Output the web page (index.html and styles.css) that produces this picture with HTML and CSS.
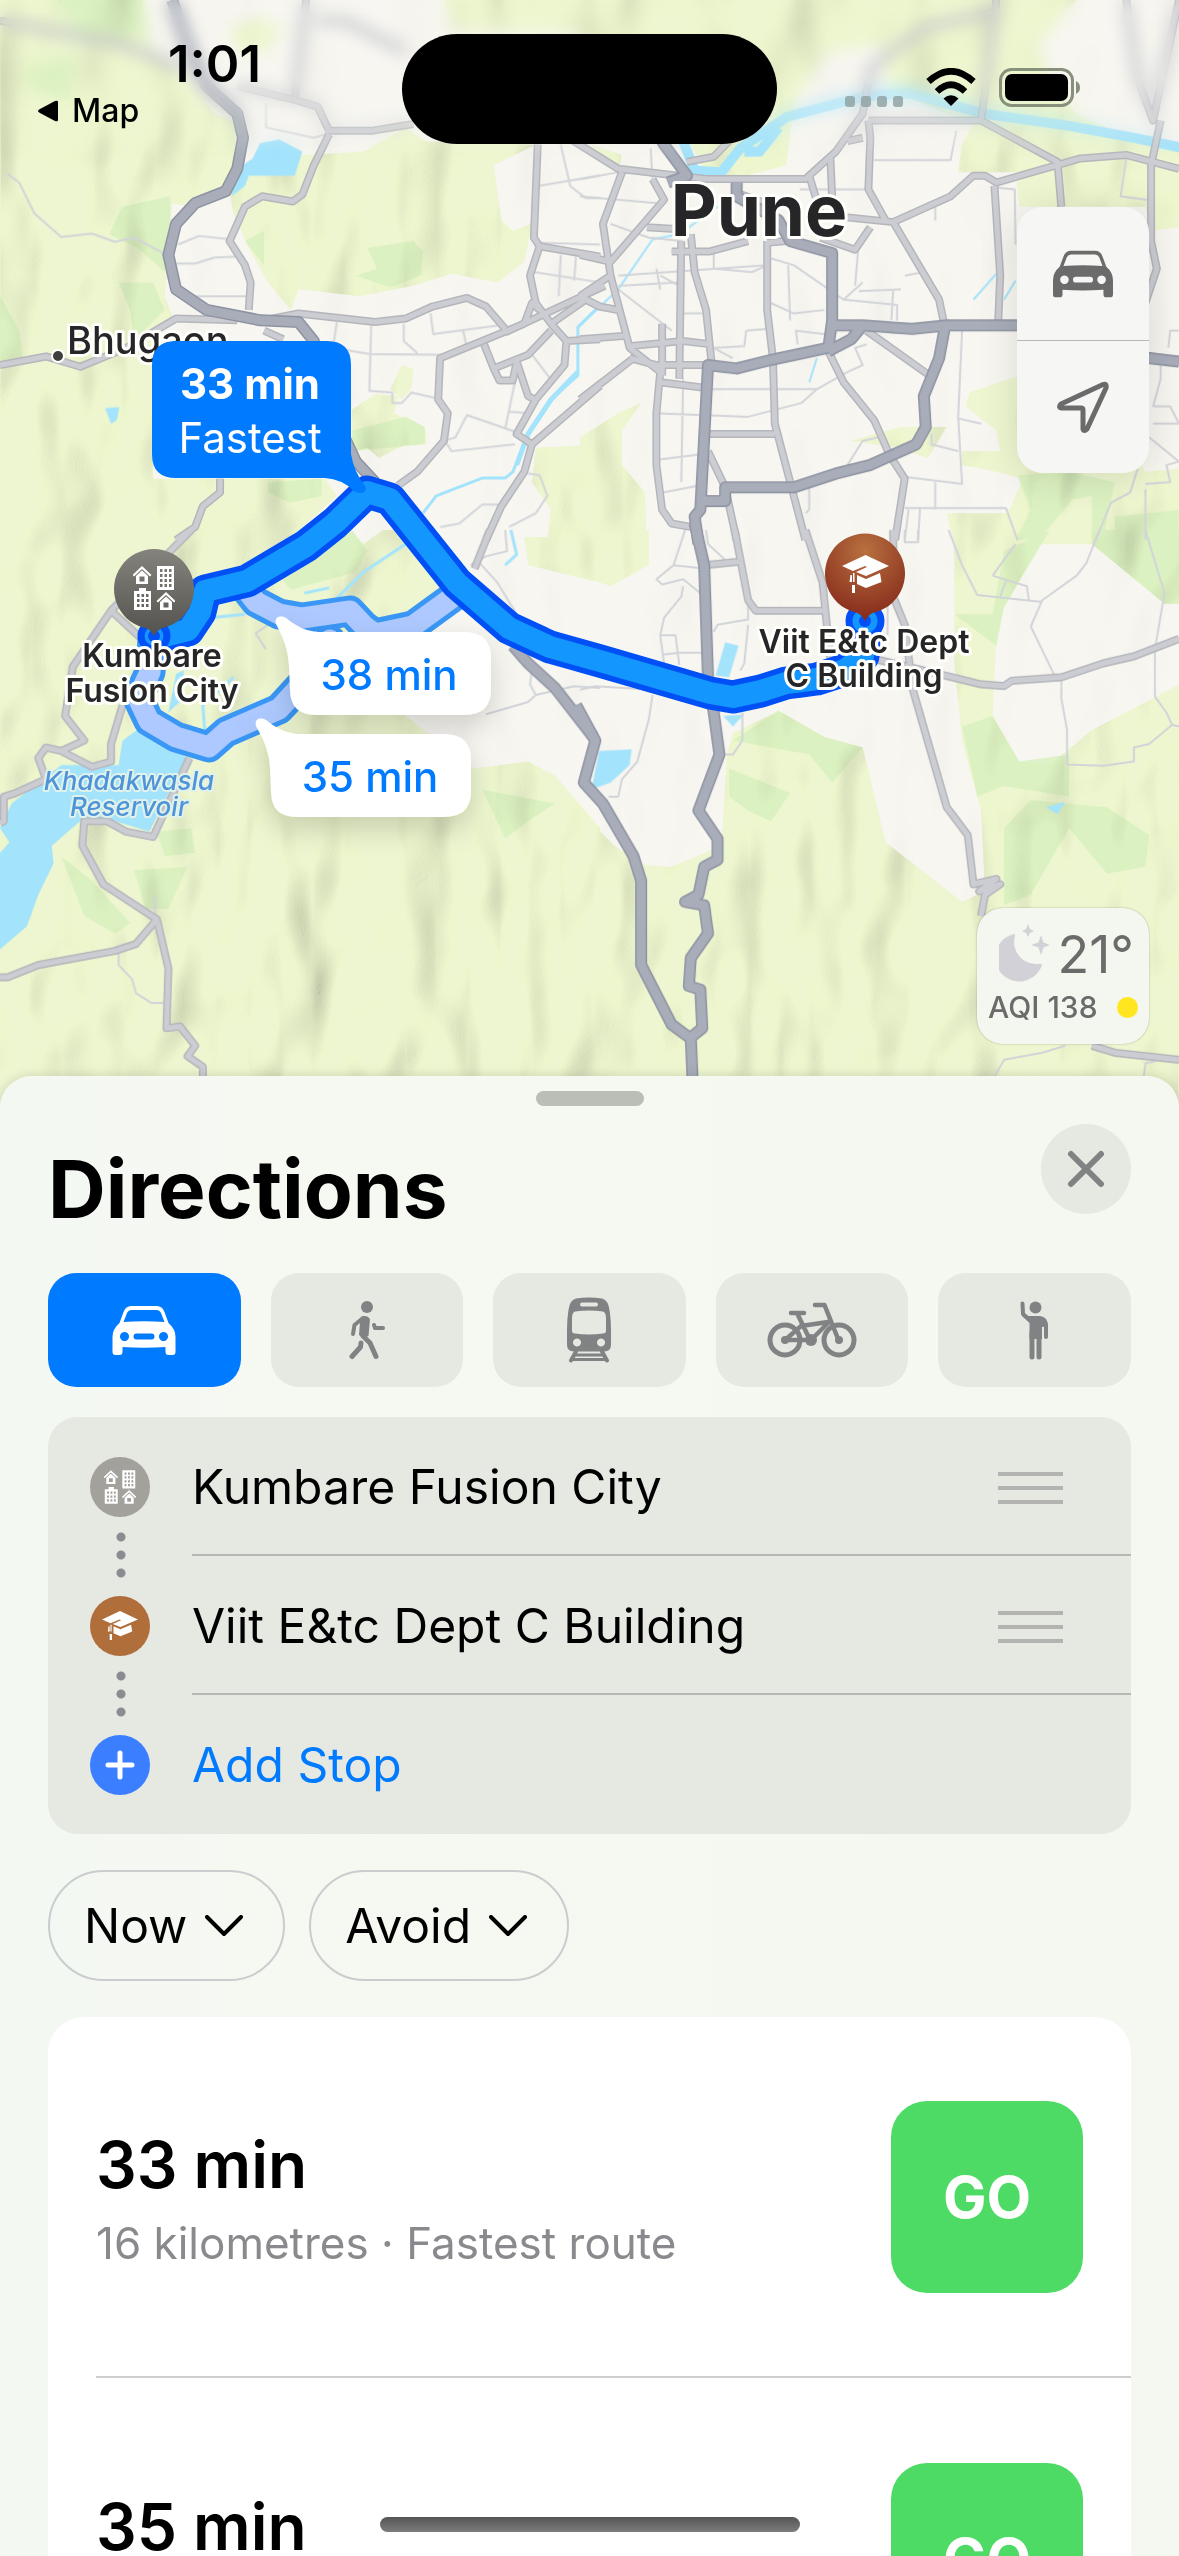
FILE: index.html
```html
<!DOCTYPE html>
<html lang="en">
<head>
<meta charset="utf-8">
<meta name="viewport" content="width=device-width, initial-scale=1">
<title>Directions</title>
<link rel="stylesheet" href="styles.css">
</head>
<body>
<svg class="sprite" aria-hidden="true">
  <symbol id="car" viewBox="0 0 63 49"><path fill-rule="evenodd" d="M7 17 11 6Q13 0 19 0H44Q50 0 52 6L56 17Q63 23 63 31V46a3 3 0 0 1-3 3h-4a3 3 0 0 1-3-3v-5Q31 42.500 10 41v5a3 3 0 0 1-3 3H3a3 3 0 0 1-3-3V31Q0 23 7 17ZM11 16 14.500 7Q16 4 19 4H44Q47 4 48.500 7L52 16Q31 14.500 11 16ZM12 26a4.500 4.500 0 1 0 .01 0ZM51 26a4.500 4.500 0 1 0 .01 0ZM24 27.500h15a3 3 0 0 1 0 6H24a3 3 0 0 1 0-6Z"/></symbol>
  <symbol id="walk" viewBox="0 0 36 59"><circle cx="18" cy="6" r="6"/><path d="M12 16Q18 13 21 18L19.500 35Q14 38 10 34L11 21Z"/><path class="line" stroke-width="4" d="M14 17 5.500 24 4 33M25 24 26 27H34"/><path class="line" stroke-width="5" d="M14 35 21 42 27 55.500M12 42 11.500 46 3 55.500"/></symbol>
  <symbol id="train" viewBox="0 0 44 65"><path fill-rule="evenodd" d="M9 1Q22-1 35 1 41 3 42 10 44 20 44 32V47Q44 54 37 54H7Q0 54 0 47V32Q0 20 2 10 3 3 9 1ZM15 5a2 2 0 0 0 0 4H29a2 2 0 0 0 0-4ZM8 14Q5 15 5 20V33Q5 36 8 36 22 38 36 36 39 36 39 33V20Q39 15 36 14 22 12 8 14ZM10 41a4 4 0 1 0 .01 0ZM34 41a4 4 0 1 0 .01 0Z"/><path class="line" stroke-width="4" d="M9 54 4 63M35 54 40 63"/><path class="line" stroke-width="3" d="M8 57.500H36M6 62H38"/></symbol>
  <symbol id="bike" viewBox="0 0 90 56"><g class="line" stroke-width="5"><circle cx="18" cy="38" r="15"/><circle cx="72" cy="38" r="15"/><path stroke-width="4.500" d="M48 3H57.500L71.500 38M24 11H37M30 11 43 38M34 24 61 20M62 20 44 38H18L33 25"/></g><circle cx="18" cy="38" r="4"/><circle cx="72" cy="38" r="4"/><circle cx="44" cy="38" r="6"/></symbol>
  <symbol id="hail" viewBox="0 0 29 59"><circle cx="15.500" cy="6.500" r="6"/><path d="M7 15H20Q28 16 28 25L22 26V38H9.500V22L2 15Z"/><path class="line" stroke-width="4" d="M2.500 2.500 3 13 10 19M26 24V36"/><path class="line" stroke-width="5" d="M12 32V56M19 32V56"/></symbol>
  <symbol id="homes" viewBox="0 0 42 44"><path fill-rule="evenodd" d="M9 0 18.500 9 17 10.500 9 3 1 10.500-.500 9ZM9 4.500 15 10V18H3V10ZM6.500 10.500V15.500H11.500V10.500ZM33 26 42.500 35 41 36.500 33 29 25 36.500 23.500 35ZM33 30.500 39 36V44H27V36ZM30.500 36.500V41.500H35.500V36.500ZM24 0H41V24H24ZM27 3V6H29.500V3ZM31.500 3V6H34V3ZM36 3V6H38.500V3ZM27 8V11H29.500V8ZM31.500 8V11H34V8ZM36 8V11H38.500V8ZM27 13V16H29.500V13ZM31.500 13V16H34V13ZM36 13V16H38.500V13ZM27 18V21H29.500V18ZM31.500 18V21H34V18ZM36 18V21H38.500V18ZM1 25H6V22H13V25H18V44H1ZM4 28V31H6.500V28ZM8.500 28V31H11V28ZM13 28V31H15.500V28ZM4 33V36H6.500V33ZM8.500 33V36H11V33ZM13 33V36H15.500V33ZM4 38V41H6.500V38ZM8.500 38V41H11V38ZM13 38V41H15.500V38Z"/></symbol>
  <symbol id="cap" viewBox="0 0 47 38"><path d="M23.500 0 47 11 24 21 14 17 25 12 23 11 11 16 0 11ZM15 20 24 24 38 18 39.500 27 24 33 15 29ZM8.500 20H10V27H7.500ZM11 18H12.500V27H11ZM10 30H13V38H10Z"/></symbol>
  <symbol id="chevron" viewBox="0 0 38 22"><path class="line" stroke-width="4" d="M2 2 19 19 36 2"/></symbol>
</svg>

<main class="app">
  <section class="map" aria-label="Map">
    <svg class="map-art" viewBox="0 0 1179 1120" preserveAspectRatio="xMidYMin slice" role="img" aria-label="Routes from Kumbare Fusion City to Viit E&amp;tc Dept C Building">
      <defs>
        <g id="hills">
          <path transform="scale(.3827 .3444)" d="M0 0H380L390 130 470 200 560 330 620 360 600 560 500 600 450 590 440 740 430 860 450 915 400 1000V1390H850L880 1440 740 1580H0ZM640 480 800 450 950 440 1060 370 1110 410 1400 420 1290 480 1310 640 1340 670 1390 650 1370 760 1300 820 1180 795 1080 830 940 860 780 840 760 900 700 820 650 720 610 620 600 560ZM1160 0H1568V100L1180 90ZM1400 1300 1580 1290V1568H1430L1440 1480 1390 1400ZM1050 1060 1080 1070 1075 1130 1050 1160 1020 1130ZM920 1190 980 1145 1040 1150 1030 1200 1110 1240 1115 1290 1060 1290 990 1330 960 1300 920 1310ZM600 80 680 50 740 80 700 150 620 160Z"/>
          <path transform="translate(580) scale(.382 .3444)" d="M0 0H1300L1200 130 1240 250 1300 330 1500 430 1568 440V660L1500 670 1480 600H1150L1140 500H990L1000 420 1030 360 850 280 800 230V130L650 150 560 300 540 480 400 520H340L280 400H0ZM30 420 110 450 100 500ZM1150 1090 1020 1140 1010 1180 1090 1250 1100 1310 1000 1310V1350L1090 1370 1160 1390 1120 1490H960L980 1580H1568V1360L1480 1370 1400 1200ZM0 1270 100 1200 160 1170 110 1250V1350L170 1430 175 1580H0ZM710 1280 840 1240 960 1240 910 1330 830 1300Z"/>
          <path transform="translate(0 530) scale(.3827 .3508)" d="M0-10H900L950 40 1000 0 1060 0 1150 150 1120 240 1010 310 1060 530 1240 680 1380 660 1450 700 1568 850V1700H0ZM1370 20H1568V150L1380 100Z"/>
          <path transform="translate(580 530) scale(.382 .3508)" d="M0 0H180V100L80 160 0 130ZM0 800 90 900 170 955 240 960 370 900 385 640 400 580 520 515 640 590 740 620 800 890 1000 1060 1060 1030 1050 800 1000 600 980 380V-10H1230L1110 220 1090 300 1080 530 1150 660 1230 670 1340 570 1500 480 1568 440V1700H0ZM1340-10H1568V210H1530L1340 40Z"/>
        </g>
        <mask id="hill-mask"><use href="#hills" fill="#fff"/><rect width="1179" height="1120" fill="#fff" opacity=".15"/></mask>
        <filter id="relief" x="0" y="0" width="100%" height="100%">
          <feTurbulence type="fractalNoise" baseFrequency=".016 .009" numOctaves="2" seed="11"/>
          <feDiffuseLighting surfaceScale="30" diffuseConstant="1.300" lighting-color="#fffff0"><feDistantLight azimuth="205" elevation="52"/></feDiffuseLighting>
        </filter>
        <filter id="soft" x="-30%" y="-30%" width="160%" height="190%"><feDropShadow dx="0" dy="12" stdDeviation="14" flood-opacity=".16"/></filter>
        <linearGradient id="grey-pin" x2="0" y2="1"><stop stop-color="#84837d"/><stop offset="1" stop-color="#53524e"/></linearGradient>
        <radialGradient id="brown-pin" cy=".2" r=".8"><stop stop-color="#b8713f"/><stop offset="1" stop-color="#86291b"/></radialGradient>

        <g id="minor">
          <path transform="scale(.3827 .3444)" d="M20 505 50 530 70 575 90 620 160 688 240 678 300 702 350 690 435 740M465 710 520 685 600 695M460 765 510 765 560 748 620 745M500 860H650M880 935 870 1010 965 1028 1155 1030M970 945 965 1135 1025 1140V1170H1050L1075 1140 1135 1155M1125 910 1132 970 1300 945M1055 940V990L1090 1025M1210 960 1220 1010M1405 540 1568 510M1465 420 1490 540 1530 575H1568M1395 790 1568 820M1465 740 1460 860M1505 745 1500 815M1410 705 1568 710M1390 1030 1445 1110M1345 1110 1320 1245M1330 1195 1380 1200M1160 1280 1190 1270 1220 1205 1350 1255M1165 1285 1180 1310 1345 1290M1150 1530 1200 1520 1260 1465 1305 1465M1380 1375 1410 1380 1430 1440 1400 1490 1330 1530M695 300V370L820 400 850 390"/>
          <path transform="translate(580) scale(.382 .3444)" d="M0 570 200 590M185 430 190 530M575 550H760M770 465H970L985 380M930 590V640M1090 545 1138 550 1140 710M0 520 100 500M80 650 180 690 270 700M100 800 490 770M100 830 260 820M350 730V780L450 790 490 770M200 780 210 840M210 800 260 830M100 840 240 960M435 960 430 1005 350 1010M435 960 490 955M350 1010 400 1040M500 750 560 770 690 870 830 885V930M570 1000 565 960 640 970M720 830 730 700M740 820 690 870M730 845 840 840M820 840 815 930M850 800 900 790M500 880 560 910 640 900M545 770 550 930M270 910 320 910M270 1100 265 1400M335 1130 620 1130 700 1080 740 1060 720 1010 750 1000M205 1200 440 1210 580 1170 620 1130M200 1335 310 1320M215 1430 310 1410M1000 960 990 1210 1000 1405 855 1385M920 1260V1290L990 1310M700 1350 740 1280 780 1270M930 1400V1480M850 1475 1115 1475 1145 1568M990 1215 1050 1230M1430 460 1415 570 1485 580M1500 1180H1545L1568 1230M1500 1230H1568M1490 1270 1568 1340 1535 1350 1545 1400 1480 1405M1460 1360 1440 1430 1390 1460 1350 1568M1520 1060V1100L1500 1180M600 1400V1480L590 1490M1568 960H1545L1540 1010M860 1480 850 1568M890 1475 885 1568M1480 1420V1568"/>
          <path transform="translate(0 530) scale(.3827 .3508)" d="M695 340 668 295 700 270M405 1045V1110M310 1205V1240L345 1280 355 1320 395 1348H430M1320 0 1325 60 1270 75M1250 90 1300 150 1350 240M1390 400 1385 440 1400 470 1500 445 1568 450M1400 470 1380 490 1270 525M1270 75 1230 100"/>
          <path transform="translate(580 530) scale(.382 .3508)" d="M275 0 245 100 200 140 215 155 270 140 315 180M245 100 330 110M330 0 335 40 380 85M270 160 265 190 220 250 210 300 220 380M210 300H250L260 385M220 355 260 350 330 350M350 290 360 270 440 255V200M440 270 430 380 420 400M190 470 180 540 150 660 110 710 100 760H75M425 520V600L400 640H380M0 455 40 445 190 455 330 420M850 0V35H885V0M965 0 1000 100 1040 185 1210 205M1080 130 1140 40M1080 130 1170 160 1175 200M1115 145 1100 190M1360 0 1325 95 1300 130 1210 200 1180 275 1240 410 1260 420V480L1275 570V668L1370 672 1450 660V620L1490 610 1550 555 1568 560M1550 555 1535 520 1505 475V340L1530 180 1480 0M805 300V200M1080 1568 1110 1510 1210 1490 1270 1470M1475 1568 1480 1520 1505 1515"/>
        </g>
        <g id="roads">
          <path transform="scale(.3827 .3444)" d="M0 1060 120 1035 210 1065 330 1010 460 925 620 930M690 930 780 910 980 935 1060 925 1130 890 1220 865 1270 890 1320 955M860 390 820 480 790 565 765 585 685 570 640 600 600 700 640 770 655 820 650 900M860 380 830 310 770 290 620 250M850 380H970L1080 360M770 290 800 0M0 60 320 130 480 200M830 60 900 60 1060 150M1405 420 1395 690 1410 715 1385 800 1400 880 1440 940 1480 990 1475 1060 1400 1160 1350 1260 1390 1290M1320 965 1580 830M1370 940 1150 1040 1145 1160 1170 1200 1160 1280 1090 1370 1040 1410M1568 1120 1390 1290 1370 1370 1310 1470 1270 1568M1410 715 1568 745M1440 960 1380 1030 1290 1070 1265 1000M1290 1070 1305 1105H1340L1350 1050 1380 1150 1405 1165M1440 940 1530 870 1568 890M1480 990 1568 985M1370 940 1390 880 1410 900M575 1390V1430L530 1470 510 1530 460 1568M690 960 740 985"/>
          <path transform="translate(580) scale(.382 .3444)" d="M-30 400 100 490 330 520H590L670 440 740 330 760 200 900 80 1100 30M280 470 350 455 390 410M600 510 630 620M655 450 660 570M755 350 760 400 755 550 800 640M755 350H1050L1250 470 1260 600M1050 350 1090 0M700 410 740 400M600 620 820 645 910 600 970 570 1030 510H1060L1090 530 1310 460 1430 450 1568 490M1430 0 1460 230 1500 350 1568 0M1520 350 1495 480V700L1510 780 1480 880M1085 540 1100 800 1095 930M820 645 940 870 955 950M110 500 60 650 80 800 130 1010 210 1080 200 1200V1350L215 1480 240 1520 290 1530M190 520 220 580 80 760 0 740M80 800 0 860M265 700 260 1100M290 680 300 790 330 900 345 1060M240 730H340L440 700M490 700V900L505 1040 510 1230 590 1568M650 1020 690 1110 770 1220 810 1320 850 1390 825 1568M750 960 915 1090M140 1040 0 1160M130 1005 270 990 345 1000M0 985 120 975M130 1040 200 1060 340 1060M335 1260H510M380 1415 410 1568M335 1310 380 1415M210 1110 320 1125M215 940V1090M175 660 250 665M0 860 50 890 100 900M630 690 720 725 760 660M410 560 510 600M490 705 540 700"/>
          <path transform="translate(0 530) scale(.3827 .3508)" d="M500 0 290 230 190 390 170 530 220 600 160 630 120 620 100 650 120 710 40 750 10 760V830L0 835M290 230 380 320M160 630 240 675 290 660V610L320 500M495 650 400 875 330 860 280 830H220L215 900 270 1010 410 1110 440 1250 435 1420 470 1415 510 1470 490 1500 530 1530V1600M410 1110 355 1180 300 1200 100 1240 20 1275H0M1280 0 1240 110"/>
          <path transform="translate(580 530) scale(.382 .3508)" d="M405 0 440 200 460 230H640M590 0 635 150 655 370M330 100 420 90M820 0V190L850 270 870 450 960 790 1015 870 1030 1010 1090 995 1045 1030 1100 1010 1060 1040 1050 1100M780 370 900 400 1050 440 1110 445 1130 430 1260 420 1370 380 1450 360 1568 310M1340 1470 1400 1490 1568 1510"/>
        </g>
        <g id="highways">
          <path transform="scale(.3827 .3444)" d="M450 0 490 130 540 250 620 330 635 400 620 490 590 555 510 590 460 650 440 740 460 840 540 900 680 930 780 935 820 990 850 1150 930 1340 980 1400"/>
          <path transform="translate(580) scale(.382 .3444)" d="M160 300 220 420 280 510 230 530M410 530V570L520 640 550 700 660 735V930L650 1010 500 1045 410 1070 335 1060 315 1480 300 1500 310 1580M650 945H740L870 955 960 945H1150L1490 1040 1568 1050M740 945 710 985 650 1020M955 950 940 1040 900 1150 905 1240 880 1290 760 1350 670 1375 560 1415H380V1455H320"/>
          <path transform="translate(0 530) scale(.3827 .3508)" d="M1340 330 1380 380 1450 450 1550 590"/>
          <path transform="translate(580 530) scale(.382 .3508)" d="M-10 500 40 600 10 720 60 780 140 930 160 1000V1240L240 1410 290 1450 300 1700M300-20 325 100 335 420 350 520 365 640 310 800 360 880V940L325 960 310 1040 275 1060 325 1070 335 1150 290 1220 285 1300 315 1310 320 1420 280 1455"/>
        </g>
      </defs>

      <rect width="1179" height="1120" fill="#f7f6f1"/>
      <use href="#hills" fill="#edf6d0"/>
      <g class="woods">
        <path transform="scale(.3827 .3444)" d="M320 600 445 570V690L430 790 360 720 285 680ZM310 820H400L430 900 350 990 340 900ZM960 720 1080 700 1105 730 1100 800 1020 835 930 800 985 780ZM0 860 50 960 60 1040 0 1060ZM700 1400 840 1390V1440L760 1460 700 1430ZM640 700 690 670V770ZM150 0H370L390 110H200ZM60 200 200 150 180 290 80 260ZM920 1250 1060 1210 1110 1240V1290L920 1310Z"/>
        <path transform="translate(580) scale(.382 .3444)" d="M1145 1380 1280 1370 1400 1400 1370 1568H1340V1440L1290 1450 1200 1568H1140L1180 1480ZM1400 1500 1568 1480V1568H1400Z"/>
        <path transform="translate(0 530) scale(.3827 .3508)" d="M720 120 840 60 920 0 960 60 930 120 760 170ZM410 860 500 850 510 920 430 930ZM350 970 490 960 440 1080 380 1080ZM1260 740 1450 780 1380 830 1320 880ZM160 930 240 1000 340 1120 300 1150 220 1100Z"/>
        <path transform="translate(580 530) scale(.382 .3508)" d="M400 600 520 515 640 590 740 620 660 720 600 640 500 620ZM390 680 550 750 500 830 440 800 390 760ZM1000 560 1080 530 1150 660 1280 640V760L1110 730 1040 760ZM1110 850 1180 770 1380 790 1490 870 1480 960 1380 980 1280 850 1180 1040 1110 1070ZM980 240 1080 240 1110 60 1230 0 1110 220 1090 330ZM1340 0H1568V210H1530L1340 40Z"/>
      </g>
      <g mask="url(#hill-mask)" class="relief"><rect width="1179" height="1120" filter="url(#relief)"/></g>
      <g class="water">
        <path transform="scale(.3827 .3444)" d="M680 415 730 405 790 440 770 510H650L640 540 605 570 620 490 660 460ZM275 1185 312 1182 305 1220 290 1230Z"/>
        <path transform="translate(0 530) scale(.3827 .3508)" d="M370 560 320 600 310 670H160L30 780 0 850 25 890 0 920V1195L70 1130 100 1040 140 950 135 900 220 820 300 830 390 860 440 750 490 650ZM460 410 480 400V480L440 520Z"/>
        <path transform="translate(580 530) scale(.382 .3508)" d="M380 320 415 330 390 420 355 415ZM375 530 430 525 400 560ZM50 630 135 625 130 670 80 720 30 740ZM1220 790 1270 775 1250 810Z"/>
      </g>
      <g class="rivers">
        <path stroke-width="3" transform="scale(.3827 .3444)" d="M1560 895 1510 950V1090L1440 1160 1380 1260 1340 1370 1320 1388H1260L1140 1440 1105 1490"/>
        <path stroke-width="5" transform="scale(.3827 .3444)" d="M1510 1080 1440 1160 1380 1260 1350 1350"/>
        <path stroke-width="10" transform="translate(580) scale(.382 .3444)" d="M1580 430 1450 400 1280 365 1060 330 860 270 740 280 540 340 420 430 370 500 300 495 270 410M430 440H470L520 370"/>
        <path stroke-width="2" transform="translate(580) scale(.382 .3444)" d="M0 945 100 840 190 695 260 680 360 600M1090 795 1030 870M1140 815 1110 870M620 1040 600 1110"/>
        <path stroke-width="3" transform="translate(0 530) scale(.3827 .3508)" d="M1060 40 950 120 880 195M550 250 640 240M795 180 860 165M610 420 530 500 535 570M1335 0 1350 70 1320 100"/>
      </g>
      <use href="#minor" class="minor"/>
      <use href="#roads" class="road-edge"/><use href="#roads" class="road"/>
      <use href="#highways" class="highway-edge"/><use href="#highways" class="highway"/>

      <g class="route">
        <g stroke="#3a97f5" stroke-width="31"><path d="M245 588 256 602 279 614 302 618 350 611 364 626 375 634 413 626 457 594"/><path d="M153 640 150 672 138 698 149 721 176 737 209 747 226 732 279 709 302 684 330 640"/></g>
        <g stroke="#adc9ff" stroke-width="21"><path d="M245 588 256 602 279 614 302 618 350 611 364 626 375 634 413 626 457 594"/><path d="M153 640 150 672 138 698 149 721 176 737 209 747 226 732 279 709 302 684 330 640"/></g>
        <path stroke="#0050f5" stroke-width="33" d="M160 637 188 630 200 612 205 591 247 581 279 562 306 546 335 523 367 492 390 499 457 583 509 628 550 647 600 661 710 693 733 697 761 691 786 683 817 679 845 670 863 656 865 625"/>
        <path stroke="#1496ff" stroke-width="22" d="M160 637 188 630 200 612 205 591 247 581 279 562 306 546 335 523 367 492 390 499 457 583 509 628 550 647 600 661 710 693 733 697 761 691 786 683 817 679 845 670 863 656 865 625"/>
      </g>
      <g fill="#1496ff" stroke="#0050f5" stroke-width="7"><circle cx="154" cy="636" r="13"/><circle cx="865" cy="621" r="16"/></g>
      <circle cx="154" cy="636" r="6" fill="#0050f5"/><circle cx="865" cy="621" r="6" fill="#0050f5"/>

      <g class="label">
        <circle cx="58" cy="356" r="6" fill="#3f3f3b" stroke="#fff" stroke-width="2"/>
        <text x="67" y="354" class="town">Bhugaon</text>
        <text x="759" y="236" class="city">Pune</text>
        <g class="lake"><text x="129" y="790">Khadakwasla</text><text x="129" y="816">Reservoir</text></g>
        <g class="place"><text x="152" y="667">Kumbare</text><text x="152" y="702">Fusion City</text></g>
        <g class="place"><text x="864" y="653">Viit E&amp;tc Dept</text><text x="864" y="687">C Building</text></g>
      </g>

      <path fill="url(#grey-pin)" d="M154 636Q150 628 143 627.500A40 40 0 1 1 165 627.500Q158 628 154 636Z"/>
      <use href="#homes" x="133" y="566" width="42" height="44" fill="#fff"/>
      <path fill="url(#brown-pin)" d="M865 621Q861 613 854 612A40 40 0 1 1 876 612Q869 613 865 621Z"/>
      <use href="#cap" x="842" y="555" width="47" height="38" fill="#fff"/>

      <path filter="url(#soft)" fill="#fff" d="M289 665Q288 645 277 626C273 619 278 614 286 618Q300 630 316 632H464Q491 632 491 658V689Q491 715 464 715H316Q290 715 290 689Z"/>
      <path filter="url(#soft)" fill="#fff" d="M270 767Q269 747 257 728C253 721 258 716 266 720Q280 732 296 734H444Q471 734 471 760V791Q471 817 444 817H297Q271 817 271 791Z"/>
      <path fill="#007aff" d="M176 341H327Q351 341 351 365V454Q354 472 365 486C368 493 361 495 354 491Q342 479 325 478H176Q152 478 152 454V365Q152 341 176 341Z"/>
      <g class="bubble">
        <text x="250" y="399" class="bubble-fast">33 min</text><text x="250" y="453" class="bubble-note">Fastest</text>
        <text x="389" y="690">38 min</text><text x="370" y="792">35 min</text>
      </g>
    </svg>

    <div class="haze"></div>

    <header class="status">
      <div class="status-left">
        <time class="clock">1:01</time>
        <a class="back" href="#"><svg width="20" height="22" viewBox="0 0 20 22"><path d="M0 11Q0 10 2 9L17 1Q20 0 20 2V20Q20 22 17 21L2 13Q0 12 0 11Z"/></svg>Map</a>
      </div>
      <div class="island"></div>
      <div class="status-right">
        <svg class="cell" width="58" height="11" viewBox="0 0 58 11"><g fill="#8ea0a0"><rect width="10" height="11" rx="3"/><rect x="16" width="10" height="11" rx="3"/><rect x="32" width="10" height="11" rx="3"/><rect x="48" width="10" height="11" rx="3"/></g></svg>
        <svg width="50" height="38" viewBox="0 0 50 38"><path d="M25 38 17.500 30.500Q25 24 32.500 30.500Z"/><g fill="none" stroke="#000" stroke-width="6.500"><path d="M11 23.500Q25 10 39 23.500"/><path d="M2.500 13.500Q25-7 47.500 13.500"/></g></svg>
        <svg width="82" height="39" viewBox="0 0 82 39"><rect x="1.500" y="1.500" width="72" height="36" rx="11" fill="none" stroke="#87907a" stroke-width="3"/><rect x="6" y="6" width="63" height="27" rx="7"/><path d="M77 13Q81 15 81 19.500 81 24 77 26Z" fill="#87907a"/></svg>
      </div>
    </header>

    <div class="controls">
      <button type="button" aria-label="Map mode"><svg width="60" height="48"><use href="#car"/></svg></button>
      <button type="button" aria-label="My location"><svg width="52" height="52" viewBox="0 0 52 52"><path fill="none" stroke="currentColor" stroke-width="5" stroke-linejoin="round" d="M46 3.500Q50 2 49 7L30 48Q27 51 26 48V29Q26 27 24 27H4Q1 26 4 23Z"/></svg></button>
    </div>

    <div class="weather">
      <div class="weather-now"><svg width="52" height="58" viewBox="0 0 52 58"><g fill="#d2d1d7"><path d="M15 10A24 24 0 1 0 43 41Q42 39 39 40A22 22 0 0 1 16 12Q16 10 15 10Z"/><path d="M29 0 31 5 35 7 31 9 29 13 27 9 23 7 27 5ZM42 11 44.500 18.500 51 21 44.500 23.500 42 31 39.500 23.500 32 21 39.500 18.500Z"/></g></svg><span>21°</span></div>
      <div class="aqi"><span>AQI 138</span><i></i></div>
    </div>
  </section>

  <section class="sheet">
    <div class="grabber"></div>
    <div class="title-row">
      <h1>Directions</h1>
      <button type="button" class="close" aria-label="Close"><svg width="38" height="38" viewBox="0 0 38 38"><path class="line" stroke-width="6" d="M4 4 34 34M34 4 4 34"/></svg></button>
    </div>

    <nav class="modes" aria-label="Travel mode">
      <button type="button" class="mode active" aria-label="Drive"><svg width="64" height="49"><use href="#car"/></svg></button>
      <button type="button" class="mode" aria-label="Walk"><svg width="36" height="59"><use href="#walk"/></svg></button>
      <button type="button" class="mode" aria-label="Transit"><svg width="44" height="66"><use href="#train"/></svg></button>
      <button type="button" class="mode" aria-label="Cycle"><svg width="90" height="56"><use href="#bike"/></svg></button>
      <button type="button" class="mode" aria-label="Rideshare"><svg width="29" height="59"><use href="#hail"/></svg></button>
    </nav>

    <ol class="stops">
      <li class="stop">
        <span class="badge homes"><svg width="32" height="34"><use href="#homes"/></svg></span>
        <span class="stop-name">Kumbare Fusion City</span>
        <span class="handle"></span>
      </li>
      <li class="stop">
        <span class="badge school"><svg width="36" height="29"><use href="#cap"/></svg></span>
        <span class="stop-name">Viit E&amp;tc Dept C Building</span>
        <span class="handle"></span>
      </li>
      <li class="stop">
        <span class="badge add"><svg width="30" height="30" viewBox="0 0 30 30"><path class="line" stroke-width="5" d="M15 3V27M3 15H27"/></svg></span>
        <a class="stop-name" href="#">Add Stop</a>
      </li>
    </ol>

    <div class="options">
      <button type="button" class="chip">Now<svg width="38" height="22"><use href="#chevron"/></svg></button>
      <button type="button" class="chip">Avoid<svg width="38" height="22"><use href="#chevron"/></svg></button>
    </div>

    <ul class="routes">
      <li class="route-row">
        <div class="route-text"><h2>33 min</h2><p>16 kilometres · Fastest route</p></div>
        <button type="button" class="go">GO</button>
      </li>
      <li class="route-row">
        <div class="route-text"><h2>35 min</h2><p></p></div>
        <button type="button" class="go">GO</button>
      </li>
    </ul>
  </section>
  <div class="home-bar"></div>
</main>
</body>
</html>
```
FILE: styles.css
```css
* { box-sizing: border-box; }

body {
  margin: 0;
  background: #f5f7f1;
  color: #000;
  font-family: Inter, "Liberation Sans", sans-serif;
}

button {
  border: 0;
  padding: 0;
  background: none;
  color: inherit;
  font: inherit;
  cursor: pointer;
}

a { color: inherit; text-decoration: none; }
h1, h2, p, ol, ul { margin: 0; padding: 0; }
ol, ul { list-style: none; }
svg { display: block; fill: currentColor; }
.sprite { position: absolute; width: 0; height: 0; }
.line { fill: none; stroke: currentColor; stroke-linecap: round; stroke-linejoin: round; }

.app {
  position: relative;
  height: 100vh;
  overflow: hidden;
}

/* Map */
.map { position: relative; }
.map-art { width: 100%; aspect-ratio: 1179 / 1120; }
.map-art path { vector-effect: non-scaling-stroke; }
.woods { fill: #d8f1bf; opacity: .8; }
.water { fill: #a3e3fc; }
.relief { mix-blend-mode: multiply; opacity: .2; }
.rivers { fill: none; stroke: #a3e3fc; stroke-linejoin: round; }
.minor, .road, .road-edge, .highway, .highway-edge { fill: none; stroke-linejoin: round; }
.minor { stroke: #d2d4d9; stroke-width: 2px; }
.road-edge { stroke: #b4b6bc; stroke-width: 8px; }
.road { stroke: #cccdd2; stroke-width: 5px; }
.highway-edge { stroke: #8e93a2; stroke-width: 12px; }
.highway { stroke: #a8adb9; stroke-width: 9px; }
.route { fill: none; stroke-linejoin: round; stroke-linecap: round; }

.label text {
  fill: #262628;
  stroke: #fffffb;
  stroke-width: 6px;
  stroke-linejoin: round;
  paint-order: stroke;
}
.label .town { font-size: 38px; font-weight: 500; }
.label .city { font-size: 71px; font-weight: 700; text-anchor: middle; }
.label .place { font-size: 32px; font-weight: 600; text-anchor: middle; }
.label .lake { font-size: 26px; font-weight: 500; font-style: italic; text-anchor: middle; }
.label .lake text { fill: #4f93d8; stroke: #e0f2ea; stroke-width: 4px; }
.bubble { fill: #007aff; font-size: 42px; font-weight: 500; text-anchor: middle; }
.bubble .bubble-fast { fill: #fff; font-weight: 700; }
.bubble .bubble-note { fill: #fff; font-weight: 400; }

.haze {
  position: absolute;
  inset: 0 0 auto;
  height: 160px;
  backdrop-filter: blur(8px);
  mask-image: linear-gradient(#000 50%, transparent);
}

/* Status bar */
.status {
  position: absolute;
  inset: 0 0 auto;
  display: grid;
  grid-template-columns: 1fr 375px 1fr;
  padding-top: 34px;
}
.status-left { padding-left: 38px; }
.clock { display: block; padding-left: 130px; font-size: 51px; font-weight: 600; line-height: 60px; }
.back { display: flex; align-items: center; gap: 14px; font-size: 32px; font-weight: 500; line-height: 34px; }
.island { height: 110px; border-radius: 55px; background: #000; }
.status-right { display: flex; justify-content: flex-end; align-items: flex-start; gap: 23px; padding: 34px 98px 0 0; }
.cell { margin-top: 28px; opacity: .8; }

/* Floating map panels */
.controls, .weather {
  position: absolute;
  right: 30px;
  border-radius: 26px;
  background: #f6f7f5;
  color: #6b6b6b;
  box-shadow: 0 4px 40px rgba(0, 0, 0, .12);
}
.controls { top: 207px; width: 132px; }
.controls button { display: grid; place-items: center; width: 100%; height: 133px; }
.controls button + button { border-top: 1px solid #b5b6b5; }
.weather { top: 908px; width: 172px; padding: 16px 11px; background: #f4f7ef; box-shadow: 0 0 2px rgba(0, 0, 0, .3); }
.weather-now { display: flex; justify-content: space-between; padding-left: 11px; font-size: 52px; line-height: 62px; }
.weather-now span { margin-right: 4px; }
.aqi { display: flex; justify-content: space-between; align-items: center; font-size: 30px; font-weight: 500; line-height: 42px; }
.aqi i { width: 21px; height: 21px; border-radius: 50%; background: #ffe620; }

/* Sheet */
.sheet {
  position: relative;
  margin-top: -44px;
  padding: 15px 48px 0;
  border-radius: 32px 32px 0 0;
  background: linear-gradient(90deg, #f3f8f3, #f6f8f2 20%, #f5f7f1);
  box-shadow: 0 0 12px rgba(0, 0, 0, .15);
}
.grabber { width: 108px; height: 15px; margin: 0 auto; border-radius: 8px; background: #bbbdb7; }
.title-row { display: flex; justify-content: space-between; margin-top: 18px; height: 149px; }
h1 { padding-top: 15px; font-size: 80px; font-weight: 700; line-height: 100px; }
.close { display: grid; place-items: center; width: 90px; height: 90px; border-radius: 50%; background: #e6e8e2; color: #808284; }

.modes { display: grid; grid-template-columns: repeat(5, 1fr); gap: 30px; }
.mode { display: grid; place-items: center; height: 114px; border-radius: 28px; background: #e6e8e2; color: #808284; }
.mode.active { background: #007aff; color: #fff; }

.stops { margin-top: 30px; border-radius: 30px; background: #e6e8e2; }
.stop { position: relative; display: flex; align-items: center; padding-left: 42px; height: 139px; font-size: 48px; }
.stop-name { display: flex; align-items: center; flex: 1; align-self: stretch; margin-left: 42px; padding-top: 2px; border-bottom: 2px solid #b7b8b4; }
.stop:last-child .stop-name { border-color: transparent; }
a.stop-name { color: #007aff; }
.badge { display: grid; place-items: center; width: 60px; height: 60px; border-radius: 50%; color: #fff; }
.homes { background: #a2a19c; }
.school { background: #b06e3a; }
.add { background: #3b7eff; }
.stop + .stop::before {
  content: "";
  position: absolute;
  top: -28px;
  left: 68px;
  width: 10px;
  height: 54px;
  background: radial-gradient(circle, #8c8b92 4px, transparent 5px) center / 10px 18px;
}
.handle {
  align-self: stretch;
  padding: 55px 68px 50px 0;
  border-bottom: 2px solid #b7b8b4;
}
.handle::before {
  content: "";
  display: block;
  width: 65px;
  height: 32px;
  background: linear-gradient(#b3b4b1 4px, transparent 4px) 0 0 / 100% 14px;
}

.options { display: flex; gap: 24px; margin-top: 36px; }
.chip { display: flex; align-items: center; gap: 18px; height: 111px; padding: 0 40px 0 34px; border: 2px solid #cbccce; border-radius: 56px; font-size: 48px; }

.routes { margin-top: 36px; border-radius: 36px; background: #fff; }
.route-row { display: flex; justify-content: space-between; align-items: center; margin-left: 48px; padding-right: 48px; height: 361px; }
.route-row:first-child { border-bottom: 2px solid #cfcfd0; }
.route-text { padding-top: 13px; }
h2 { font-size: 64px; font-weight: 600; line-height: 80px; }
.route-text p { min-height: 76px; color: #8a8a8e; font-size: 44px; line-height: 76px; }
.go { width: 192px; height: 192px; border-radius: 36px; background: #4ddb65; color: #fff; font-size: 58px; font-weight: 700; }

.home-bar {
  position: absolute;
  bottom: 24px;
  left: 50%;
  width: 420px;
  height: 15px;
  margin-left: -210px;
  border-radius: 8px;
  background: linear-gradient(#555, #7c7c7c);
}
```
